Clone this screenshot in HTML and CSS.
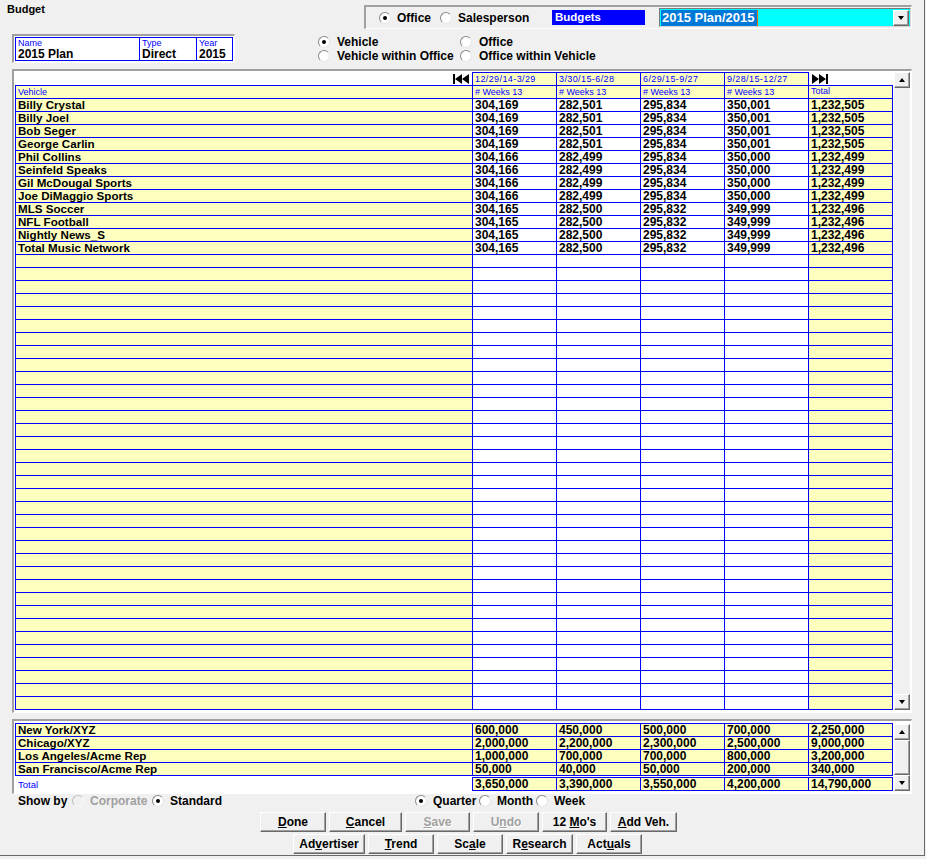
FILE: index.html
```html
<!DOCTYPE html>
<html>
<head>
<meta charset="utf-8">
<title>Budget</title>
<link rel="stylesheet" href="styles.css">
</head>
<body>
<div class="app">
  <div class="header">
    <div class="title">Budget</div>
    <div class="group">
      <div class="opt w61"><span class="rd on"></span>Office</div>
      <div class="opt w112"><span class="rd"></span>Salesperson</div>
      <div class="budgets">Budgets</div>
      <div class="combo">
        <span class="sel">2015 Plan/2015</span>
        <span class="drop"><span class="tri-d"></span></span>
      </div>
    </div>
  </div>

  <div class="row2">
    <div class="namebox">
      <div class="nameinner">
        <div class="nf nf1"><span class="nl">Name</span><span class="nv">2015 Plan</span></div>
        <div class="nf nf2"><span class="nl">Type</span><span class="nv">Direct</span></div>
        <div class="nf nf3"><span class="nl">Year</span><span class="nv">2015</span></div>
      </div>
    </div>
    <div class="views">
      <div class="opt"><span class="rd on"></span>Vehicle</div>
      <div class="opt"><span class="rd"></span>Office</div>
      <div class="opt"><span class="rd"></span>Vehicle within Office</div>
      <div class="opt"><span class="rd"></span>Office within Vehicle</div>
    </div>
  </div>

  <div class="panel main">
    <div class="grid">
      <div class="dr">
        <div class="d0"><svg width="16" height="10" viewBox="0 0 16 10"><rect x="0" y="0" width="2" height="10"/><polygon points="9,0 2,5 9,10"/><polygon points="16,0 9,5 16,10"/></svg></div>
        <div class="dc">12/29/14-3/29</div>
        <div class="dc">3/30/15-6/28</div>
        <div class="dc">6/29/15-9/27</div>
        <div class="dc">9/28/15-12/27</div>
        <div class="d5"><svg width="16" height="10" viewBox="0 0 16 10"><polygon points="0,0 7,5 0,10"/><polygon points="7,0 14,5 7,10"/><rect x="14" y="0" width="2" height="10"/></svg></div>
      </div>
      <div class="body">
        <div class="r"><div class="c y lbl">Vehicle</div><div class="c y lbl">#&nbsp;Weeks 13</div><div class="c y lbl">#&nbsp;Weeks 13</div><div class="c y lbl">#&nbsp;Weeks 13</div><div class="c y lbl">#&nbsp;Weeks 13</div><div class="c y lbl top">Total</div></div>
        <div class="r"><div class="c y nm">Billy Crystal</div><div class="c">304,169</div><div class="c">282,501</div><div class="c">295,834</div><div class="c">350,001</div><div class="c y">1,232,505</div></div>
        <div class="r"><div class="c y nm">Billy Joel</div><div class="c">304,169</div><div class="c">282,501</div><div class="c">295,834</div><div class="c">350,001</div><div class="c y">1,232,505</div></div>
        <div class="r"><div class="c y nm">Bob Seger</div><div class="c">304,169</div><div class="c">282,501</div><div class="c">295,834</div><div class="c">350,001</div><div class="c y">1,232,505</div></div>
        <div class="r"><div class="c y nm">George Carlin</div><div class="c">304,169</div><div class="c">282,501</div><div class="c">295,834</div><div class="c">350,001</div><div class="c y">1,232,505</div></div>
        <div class="r"><div class="c y nm">Phil Collins</div><div class="c">304,166</div><div class="c">282,499</div><div class="c">295,834</div><div class="c">350,000</div><div class="c y">1,232,499</div></div>
        <div class="r"><div class="c y nm">Seinfeld Speaks</div><div class="c">304,166</div><div class="c">282,499</div><div class="c">295,834</div><div class="c">350,000</div><div class="c y">1,232,499</div></div>
        <div class="r"><div class="c y nm">Gil McDougal Sports</div><div class="c">304,166</div><div class="c">282,499</div><div class="c">295,834</div><div class="c">350,000</div><div class="c y">1,232,499</div></div>
        <div class="r"><div class="c y nm">Joe DiMaggio Sports</div><div class="c">304,166</div><div class="c">282,499</div><div class="c">295,834</div><div class="c">350,000</div><div class="c y">1,232,499</div></div>
        <div class="r"><div class="c y nm">MLS Soccer</div><div class="c">304,165</div><div class="c">282,500</div><div class="c">295,832</div><div class="c">349,999</div><div class="c y">1,232,496</div></div>
        <div class="r"><div class="c y nm">NFL Football</div><div class="c">304,165</div><div class="c">282,500</div><div class="c">295,832</div><div class="c">349,999</div><div class="c y">1,232,496</div></div>
        <div class="r"><div class="c y nm">Nightly News_S</div><div class="c">304,165</div><div class="c">282,500</div><div class="c">295,832</div><div class="c">349,999</div><div class="c y">1,232,496</div></div>
        <div class="r"><div class="c y nm">Total Music Network</div><div class="c">304,165</div><div class="c">282,500</div><div class="c">295,832</div><div class="c">349,999</div><div class="c y">1,232,496</div></div>
        <div class="r"><div class="c y"></div><div class="c"></div><div class="c"></div><div class="c"></div><div class="c"></div><div class="c y"></div></div>
        <div class="r"><div class="c y"></div><div class="c"></div><div class="c"></div><div class="c"></div><div class="c"></div><div class="c y"></div></div>
        <div class="r"><div class="c y"></div><div class="c"></div><div class="c"></div><div class="c"></div><div class="c"></div><div class="c y"></div></div>
        <div class="r"><div class="c y"></div><div class="c"></div><div class="c"></div><div class="c"></div><div class="c"></div><div class="c y"></div></div>
        <div class="r"><div class="c y"></div><div class="c"></div><div class="c"></div><div class="c"></div><div class="c"></div><div class="c y"></div></div>
        <div class="r"><div class="c y"></div><div class="c"></div><div class="c"></div><div class="c"></div><div class="c"></div><div class="c y"></div></div>
        <div class="r"><div class="c y"></div><div class="c"></div><div class="c"></div><div class="c"></div><div class="c"></div><div class="c y"></div></div>
        <div class="r"><div class="c y"></div><div class="c"></div><div class="c"></div><div class="c"></div><div class="c"></div><div class="c y"></div></div>
        <div class="r"><div class="c y"></div><div class="c"></div><div class="c"></div><div class="c"></div><div class="c"></div><div class="c y"></div></div>
        <div class="r"><div class="c y"></div><div class="c"></div><div class="c"></div><div class="c"></div><div class="c"></div><div class="c y"></div></div>
        <div class="r"><div class="c y"></div><div class="c"></div><div class="c"></div><div class="c"></div><div class="c"></div><div class="c y"></div></div>
        <div class="r"><div class="c y"></div><div class="c"></div><div class="c"></div><div class="c"></div><div class="c"></div><div class="c y"></div></div>
        <div class="r"><div class="c y"></div><div class="c"></div><div class="c"></div><div class="c"></div><div class="c"></div><div class="c y"></div></div>
        <div class="r"><div class="c y"></div><div class="c"></div><div class="c"></div><div class="c"></div><div class="c"></div><div class="c y"></div></div>
        <div class="r"><div class="c y"></div><div class="c"></div><div class="c"></div><div class="c"></div><div class="c"></div><div class="c y"></div></div>
        <div class="r"><div class="c y"></div><div class="c"></div><div class="c"></div><div class="c"></div><div class="c"></div><div class="c y"></div></div>
        <div class="r"><div class="c y"></div><div class="c"></div><div class="c"></div><div class="c"></div><div class="c"></div><div class="c y"></div></div>
        <div class="r"><div class="c y"></div><div class="c"></div><div class="c"></div><div class="c"></div><div class="c"></div><div class="c y"></div></div>
        <div class="r"><div class="c y"></div><div class="c"></div><div class="c"></div><div class="c"></div><div class="c"></div><div class="c y"></div></div>
        <div class="r"><div class="c y"></div><div class="c"></div><div class="c"></div><div class="c"></div><div class="c"></div><div class="c y"></div></div>
        <div class="r"><div class="c y"></div><div class="c"></div><div class="c"></div><div class="c"></div><div class="c"></div><div class="c y"></div></div>
        <div class="r"><div class="c y"></div><div class="c"></div><div class="c"></div><div class="c"></div><div class="c"></div><div class="c y"></div></div>
        <div class="r"><div class="c y"></div><div class="c"></div><div class="c"></div><div class="c"></div><div class="c"></div><div class="c y"></div></div>
        <div class="r"><div class="c y"></div><div class="c"></div><div class="c"></div><div class="c"></div><div class="c"></div><div class="c y"></div></div>
        <div class="r"><div class="c y"></div><div class="c"></div><div class="c"></div><div class="c"></div><div class="c"></div><div class="c y"></div></div>
        <div class="r"><div class="c y"></div><div class="c"></div><div class="c"></div><div class="c"></div><div class="c"></div><div class="c y"></div></div>
        <div class="r"><div class="c y"></div><div class="c"></div><div class="c"></div><div class="c"></div><div class="c"></div><div class="c y"></div></div>
        <div class="r"><div class="c y"></div><div class="c"></div><div class="c"></div><div class="c"></div><div class="c"></div><div class="c y"></div></div>
        <div class="r"><div class="c y"></div><div class="c"></div><div class="c"></div><div class="c"></div><div class="c"></div><div class="c y"></div></div>
        <div class="r"><div class="c y"></div><div class="c"></div><div class="c"></div><div class="c"></div><div class="c"></div><div class="c y"></div></div>
        <div class="r"><div class="c y"></div><div class="c"></div><div class="c"></div><div class="c"></div><div class="c"></div><div class="c y"></div></div>
        <div class="r"><div class="c y"></div><div class="c"></div><div class="c"></div><div class="c"></div><div class="c"></div><div class="c y"></div></div>
        <div class="r"><div class="c y"></div><div class="c"></div><div class="c"></div><div class="c"></div><div class="c"></div><div class="c y"></div></div>
        <div class="r"><div class="c y"></div><div class="c"></div><div class="c"></div><div class="c"></div><div class="c"></div><div class="c y"></div></div>
        <div class="r"><div class="c y"></div><div class="c"></div><div class="c"></div><div class="c"></div><div class="c"></div><div class="c y"></div></div>
      </div>
    </div>
    <div class="sb">
      <div class="sbtn"><span class="tri-u"></span></div>
      <div class="track"></div>
      <div class="sbtn"><span class="tri-d"></span></div>
    </div>
  </div>

  <div class="panel sum">
    <div class="grid">
      <div class="body">
        <div class="r"><div class="c y nm">New York/XYZ</div><div class="c y">600,000</div><div class="c y">450,000</div><div class="c y">500,000</div><div class="c y">700,000</div><div class="c y">2,250,000</div></div>
        <div class="r"><div class="c y nm">Chicago/XYZ</div><div class="c y">2,000,000</div><div class="c y">2,200,000</div><div class="c y">2,300,000</div><div class="c y">2,500,000</div><div class="c y">9,000,000</div></div>
        <div class="r"><div class="c y nm">Los Angeles/Acme Rep</div><div class="c y">1,000,000</div><div class="c y">700,000</div><div class="c y">700,000</div><div class="c y">800,000</div><div class="c y">3,200,000</div></div>
        <div class="r"><div class="c y nm">San Francisco/Acme Rep</div><div class="c y">50,000</div><div class="c y">40,000</div><div class="c y">50,000</div><div class="c y">200,000</div><div class="c y">340,000</div></div>
      </div>
      <div class="tr">
        <div class="t0">Total</div>
        <div class="tc">3,650,000</div>
        <div class="tc">3,390,000</div>
        <div class="tc">3,550,000</div>
        <div class="tc">4,200,000</div>
        <div class="tc">14,790,000</div>
      </div>
    </div>
    <div class="sb">
      <div class="sbtn"><span class="tri-u"></span></div>
      <div class="thumb"></div>
      <div class="sbtn"><span class="tri-d"></span></div>
    </div>
  </div>

  <div class="showrow">
    <div class="showlbl">Show by</div>
    <div class="opt s80 dis"><span class="rd off"></span>Corporate</div>
    <div class="opt s263"><span class="rd on"></span>Standard</div>
    <div class="opt s64"><span class="rd on"></span>Quarter</div>
    <div class="opt s57"><span class="rd"></span>Month</div>
    <div class="opt"><span class="rd"></span>Week</div>
  </div>

  <div class="btns b1">
    <div class="b bw66"><span><u>D</u>one</span></div>
    <div class="b bw73"><span><u>C</u>ancel</span></div>
    <div class="b bw65 bdis"><span><u>S</u>ave</span></div>
    <div class="b bw66 bdis"><span>U<u>n</u>do</span></div>
    <div class="b bw65"><span>12 <u>M</u>o's</span></div>
    <div class="b bw67"><span><u>A</u>dd Veh.</span></div>
  </div>
  <div class="btns b2">
    <div class="b bw72"><span>Ad<u>v</u>ertiser</span></div>
    <div class="b bw66"><span><u>T</u>rend</span></div>
    <div class="b bw66"><span>Sc<u>a</u>le</span></div>
    <div class="b bw67"><span>R<u>e</u>search</span></div>
    <div class="b bw66"><span>Act<u>u</u>als</span></div>
  </div>
</div>
</body>
</html>
```
FILE: styles.css
```css
* { box-sizing: border-box; }
body {
  margin: 0;
  background: #f0f0f0;
  font-family: "Liberation Sans", Arial, sans-serif;
  color: #000;
}
.app {
  width: 925px;
  height: 856px;
  border-right: 1px solid #696969;
  border-bottom: 1px solid #696969;
  background: #f0f0f0;
}

/* header */
.header { display: flex; align-items: flex-start; height: 34px; }
.title { margin: 3px 0 0 7px; font-weight: bold; font-size: 11px; line-height: 12px; }
.group {
  margin-left: auto;
  margin-right: 12px;
  margin-top: 5px;
  width: 548px;
  height: 24px;
  border-style: solid;
  border-width: 2px 1px 1px 2px;
  border-color: #a0a0a0 #fff #fff #a0a0a0;
  display: flex;
  align-items: center;
  padding-left: 13px;
}
.opt {
  display: flex;
  align-items: center;
  gap: 6px;
  font-weight: bold;
  font-size: 12px;
  line-height: 14px;
  white-space: nowrap;
  flex: none;
}
.w61 { width: 61px; }
.w112 { width: 112px; }
.rd {
  width: 12px;
  height: 12px;
  border-radius: 50%;
  background: #fff;
  border: 1px solid;
  border-color: #8a8a8a #e6e6e6 #e6e6e6 #8a8a8a;
  position: relative;
  flex: none;
}
.rd.on::after {
  content: "";
  position: absolute;
  left: 3px;
  top: 3px;
  width: 4px;
  height: 4px;
  border-radius: 50%;
  background: #000;
}
.rd.off { background: #f0f0f0; border-color: #c0c0c0 #f8f8f8 #f8f8f8 #c0c0c0; }
.budgets {
  width: 93px;
  height: 15px;
  background: #0000ff;
  color: #fff;
  font-weight: bold;
  font-size: 11.5px;
  line-height: 15px;
  padding-left: 3px;
  flex: none;
}
.combo {
  margin-left: 14px;
  flex: 1;
  height: 19px;
  border: 1px solid #7a7a7a;
  border-right-color: #d8d8d8;
  border-bottom-color: #d8d8d8;
  background: #00ffff;
  display: flex;
  align-items: center;
  padding: 0 1px 0 1px;
}
.sel {
  background: #0078d7;
  color: #fff;
  font-weight: bold;
  font-size: 13px;
  line-height: 16px;
  height: 16px;
  padding: 0 2px 0 1px;
  border-right: 1px solid #e07000;
}
.drop {
  margin-left: auto;
  width: 16px;
  height: 16px;
  background: #f0f0f0;
  border: 1px solid;
  border-color: #fff #696969 #696969 #fff;
  box-shadow: inset -1px -1px #a0a0a0;
  display: flex;
  align-items: center;
  justify-content: center;
}
.tri-d, .tri-u {
  width: 0;
  height: 0;
  border-left: 3.5px solid transparent;
  border-right: 3.5px solid transparent;
}
.tri-d { border-top: 4px solid #000; }
.tri-u { border-bottom: 4px solid #000; }

/* second row */
.row2 { display: flex; height: 35px; padding-left: 12px; }
.namebox {
  width: 223px;
  height: 29px;
  border-style: solid;
  border-width: 2px 1px 1px 2px;
  border-color: #a0a0a0 #fff #fff #a0a0a0;
  padding: 1px;
  background: #fff;
}
.nameinner { display: flex; border: 1px solid #0000ff; height: 100%; }
.nf { padding-left: 2px; border-right: 1px solid #0000ff; }
.nf1 { width: 124px; }
.nf2 { width: 57px; }
.nf3 { flex: 1; border-right: 0; }
.nl { display: block; color: #0000ff; font-size: 9px; line-height: 10px; }
.nv { display: block; font-weight: bold; font-size: 12px; line-height: 12px; }
.views {
  margin-left: 83px;
  padding-top: 1px;
  display: grid;
  grid-template-columns: 142px auto;
  grid-auto-rows: 14px;
}
.views .opt { gap: 7px; }

/* panels */
.panel {
  margin-left: 12px;
  width: 900px;
  border-style: solid;
  border-width: 2px 1px 1px 2px;
  border-color: #a0a0a0 #fff #fff #a0a0a0;
  background: #fff;
  display: flex;
  gap: 1px;
}
.main { height: 644px; padding: 1px 1px 2px 1px; }
.sum { height: 75px; padding: 2px 1px 2px 1px; margin-top: 6px; }
.grid { width: 878px; flex: none; }
.body { border-top: 1px solid #0000ff; border-left: 1px solid #0000ff; }
.r, .dr, .tr { display: grid; grid-template-columns: 457px repeat(5, 84px); }
.c {
  height: 13px;
  border-right: 1px solid #0000ff;
  border-bottom: 1px solid #0000ff;
  padding-left: 2px;
  font-weight: bold;
  font-size: 12px;
  line-height: 12px;
  white-space: nowrap;
  overflow: hidden;
}
.c.nm { font-size: 11.6px; }
.y { background: #ffffc0; }
.c.lbl { color: #0000ff; font-weight: normal; font-size: 9px; line-height: 12px; }
.c.lbl.top { line-height: 10px; }
.dr { margin-left: 1px; }
.d0 {
  height: 13px;
  border-right: 1px solid #0000ff;
  display: flex;
  justify-content: flex-end;
  align-items: center;
  padding-right: 3px;
}
.d0 svg, .d5 svg { display: block; fill: #000; }
.dc {
  height: 13px;
  border-top: 1px solid #0000ff;
  border-right: 1px solid #0000ff;
  background: #ffffc0;
  color: #0000ff;
  font-size: 9px;
  line-height: 12px;
  padding-left: 2px;
  letter-spacing: 0.4px;
  white-space: nowrap;
}
.d5 { height: 13px; display: flex; align-items: center; padding-left: 3px; }
.tr { margin-left: 1px; margin-top: 1px; }
.t0 {
  height: 14px;
  border-right: 1px solid #0000ff;
  color: #0000ff;
  font-size: 9.5px;
  line-height: 14px;
  padding: 1px 0 0 2px;
}
.tc {
  height: 14px;
  border-top: 1px solid #0000ff;
  border-bottom: 1px solid #0000ff;
  border-right: 1px solid #0000ff;
  background: #ffffc0;
  font-weight: bold;
  font-size: 12px;
  line-height: 12px;
  padding-left: 2px;
  white-space: nowrap;
}

/* scrollbars */
.sb {
  width: 16px;
  flex: none;
  display: flex;
  flex-direction: column;
  background: #f0f0f0;
}
.sum .sb { margin-top: 1px; }
.sbtn, .thumb {
  height: 16px;
  flex: none;
  background: #f0f0f0;
  border: 1px solid;
  border-color: #fff #696969 #696969 #fff;
  box-shadow: inset -1px -1px #a0a0a0;
  display: flex;
  align-items: center;
  justify-content: center;
}
.track { flex: 1; background: #f0f0f0; }
.thumb { flex: 1; height: auto; }

/* show by */
.showrow {
  display: flex;
  align-items: center;
  height: 13px;
  padding-left: 18px;
  font-weight: bold;
  font-size: 12px;
}
.showlbl { width: 54px; flex: none; }
.s80 { width: 80px; }
.s263 { width: 263px; }
.s64 { width: 64px; }
.s57 { width: 57px; }
.dis { color: #a0a0a0; }

/* buttons */
.btns { display: flex; gap: 3px; }
.b1 { padding-left: 260px; margin-top: 5px; }
.b2 { padding-left: 293px; margin-top: 2px; }
.b {
  height: 20px;
  background: #f0f0f0;
  border: 1px solid;
  border-color: #fff #696969 #696969 #fff;
  box-shadow: inset -1px -1px #a0a0a0;
  font-weight: bold;
  font-size: 12px;
  display: flex;
  align-items: center;
  justify-content: center;
  flex: none;
}
.bdis { color: #a0a0a0; text-shadow: 1px 1px #fff; }
.bw65 { width: 65px; }
.bw66 { width: 66px; }
.bw67 { width: 67px; }
.bw72 { width: 72px; }
.bw73 { width: 73px; }
```
